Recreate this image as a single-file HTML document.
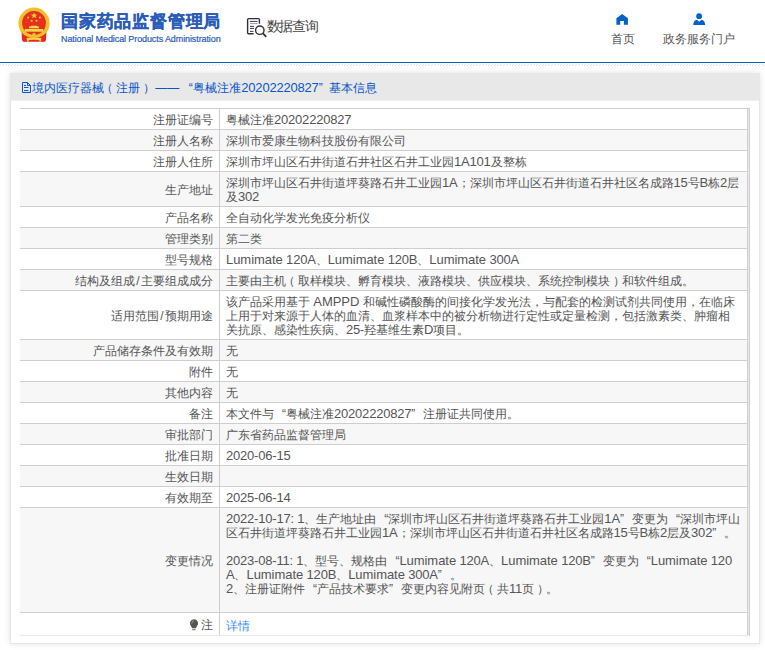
<!DOCTYPE html>
<html><head><meta charset="utf-8"><style>
*{margin:0;padding:0;box-sizing:border-box}
html,body{width:765px;height:650px;overflow:hidden;background:#fff}
body{position:relative;font-family:"Liberation Sans",sans-serif;color:#555;font-size:12px}
.a{position:absolute}
.row{position:absolute;left:20px;width:728px;border-top:1px solid #d0cdcd}
.row.g{background:#f7f7f7}
.lab{position:absolute;left:0;top:1px;bottom:-1px;width:198px;text-align:right;padding-right:5px;display:flex;align-items:center;justify-content:flex-end;white-space:nowrap}
.val{position:absolute;left:199px;top:0;bottom:0;right:0;border-left:1px solid #d0cdcd;border-right:1px solid #d0cdcd;padding:4px 6px 2px;line-height:14px;white-space:nowrap}
.val div{height:14px}
.l{font-size:13px;letter-spacing:-0.2px}
.w{letter-spacing:-0.05px}
.qo{display:inline-block;width:12px;text-align:right}
.po{position:relative;left:-2.7px}.pc{position:relative;left:2.7px}
.qc{display:inline-block;width:12px;text-align:left}
</style></head><body>
<svg class="a" style="left:0;top:0" width="60" height="48" viewBox="0 0 60 48">
<path d="M21.5 31 L22 40 Q22.3 41.7 24.5 41.7 L43.5 41.7 Q45.7 41.7 46 40 L46.5 31 Z" fill="#e52a1e"/>
<circle cx="34" cy="23.2" r="15.6" fill="#f2c12e"/>
<circle cx="34" cy="23" r="11.9" fill="#e8301f"/>
<path d="M34.1 12.4 l.85 2.2 2.3 .05 -1.8 1.45 .65 2.25 -2 -1.3 -2 1.3 .65 -2.25 -1.8 -1.45 2.3 -.05z" fill="#f5d33c"/>
<circle cx="28.1" cy="17.5" r="1" fill="#f0d040"/><circle cx="39.9" cy="17.6" r="1" fill="#f0d040"/>
<circle cx="31.6" cy="20.8" r="1" fill="#f0d040"/><circle cx="36.5" cy="20.8" r="1" fill="#f0d040"/>
<path d="M29 28.3 V26.6 L30.5 26.6 L31 25.7 H37 L37.5 26.6 L39 26.6 V28.3Z" fill="#f5d54a"/>
<rect x="24.9" y="29" width="18.2" height="2.7" fill="#f5d54a"/>
<path d="M21 30 Q24 36 34 37.2 Q44 36 47 30 L47 32 Q44 38.5 34 39 Q24 38.5 21 32Z" fill="#f2c12e"/>
<path d="M22 33 L23 41.5 L26 41.5 Q30 37 34 38.5 Q38 37 42 41.5 L45 41.5 L46 33 Q42 37.5 34 37.8 Q26 37.5 22 33Z" fill="#e52a1e"/>
<circle cx="34" cy="34.3" r="1.6" fill="#f2c12e"/>
<path d="M27 38 Q34 36.5 41 38 L40.5 40.3 Q34 39 27.5 40.3Z" fill="#f5d54a"/>
<path d="M27.3 38 L28 41.6 M40.7 38 L40 41.6" stroke="#f5d54a" stroke-width="1.4"/>
</svg>
<div class="a" style="left:61px;top:10px;font-size:16.5px;letter-spacing:0.8px;font-weight:bold;color:#2a5cb8;line-height:22px;-webkit-text-stroke:0.3px #2a5cb8;white-space:nowrap">国家药品监督管理局</div>
<div class="a" style="left:61px;top:32.5px;font-size:9px;letter-spacing:-0.1px;color:#2a5cb8;line-height:12px;-webkit-text-stroke:0.2px #2a5cb8;white-space:nowrap">National Medical Products Administration</div>
<svg class="a" style="left:246px;top:17px" width="22" height="22" viewBox="0 0 22 22">
<path d="M7.6 16.8 H2.6 Q1.6 16.8 1.6 15.8 V2.6 Q1.6 1.6 2.6 1.6 H12.4 Q13.4 1.6 13.4 2.6 V6.8" fill="none" stroke="#2f2f3f" stroke-width="1.4"/>
<path d="M4 4.4h7.5M4 9.4h4M4 11.4h4M4 14.4h3.5" stroke="#3a3a48" stroke-width="1"/>
<path d="M4 6.6h7.5" stroke="#999" stroke-width="1"/>
<circle cx="13.8" cy="13.2" r="4.2" fill="#fff" stroke="#2f2f3f" stroke-width="1.4"/>
<path d="M16.8 16.2 L20.2 19.8" stroke="#2f2f3f" stroke-width="1.7"/>
</svg>
<div class="a" style="left:266.5px;top:17px;font-size:14px;letter-spacing:-1.15px;color:#444;line-height:18px;white-space:nowrap">数据查询</div>
<svg class="a" style="left:616px;top:13px" width="12" height="12" viewBox="0 0 12 12">
<path d="M0.4 5.3 L6.2 1 L11.9 5.3 L11.9 11.8 L7.9 11.8 L7.9 7.9 L4.2 7.9 L4.2 11.8 L0.4 11.8 Z" fill="#0560c8"/>
</svg>
<div class="a" style="left:611px;top:31px;font-size:12px;color:#555;line-height:16px;white-space:nowrap">首页</div>
<svg class="a" style="left:692px;top:13px" width="14" height="13" viewBox="0 0 14 13">
<circle cx="7.1" cy="3.2" r="2.9" fill="#0560c8"/>
<path d="M1.2 12 Q1.4 7.4 5 6.8 L7.2 8.7 L9.4 6.8 Q13 7.4 13.1 12Z" fill="#0560c8"/>
</svg>
<div class="a" style="left:662.5px;top:31px;font-size:12px;color:#555;line-height:16px;white-space:nowrap">政务服务门户</div>
<div class="a" style="left:0;top:62px;width:765px;height:1px;background:#0560c8"></div>
<svg class="a" style="left:0;top:64px" width="765" height="2" shape-rendering="crispEdges"><defs><pattern id="ht" width="3" height="2" patternUnits="userSpaceOnUse"><rect x="0" y="0" width="1" height="1" fill="#e2e2e2"/><rect x="2" y="1" width="1" height="1" fill="#dcdcdc"/></pattern></defs><rect width="765" height="2" fill="url(#ht)"/></svg>
<div class="a" style="left:10px;top:73px;width:750px;height:571px;background:#fff;border:1px solid #e6e6e6;box-shadow:0 0 6px rgba(0,0,0,.12)"></div>
<div class="a" style="left:10px;top:73px;width:750px;height:27px;background:#e8e8e8"></div>
<div class="a" style="left:11px;top:100px;width:748px;height:1px;background:#eef0f8"></div>
<svg class="a" style="left:21px;top:82px" width="10" height="12" viewBox="0 0 10 12">
<path d="M1.5 0.5 H6.5 L9.5 3.5 V10.5 H1.5 Z M6.5 0.5 V3.5 H9.5" fill="none" stroke="#0a55c6" stroke-width="1"/>
<path d="M3 3.5h2M3 5.5h4.5M3 8.5h4.5" stroke="#0a55c6" stroke-width="1"/>
</svg>
<div class="a" style="left:32px;top:80px;font-size:12px;color:#0a55c6;line-height:16px;white-space:nowrap">境内医疗器械<span class="po">（</span>注册<span class="pc">）</span><span style="margin-left:3.3px">——</span><span class="qo" style="width:14px;padding-right:.5px">“</span>粤械注准<span class="l">20202220827</span><span class="qc" style="width:10px">”</span>基本信息</div>
<div class="row" style="top:108px;height:21px"><div class="lab">注册证编号</div><div class="val"><div>粤械注准<span class="l">20202220827</span></div></div></div>
<div class="row g" style="top:129px;height:21px"><div class="lab">注册人名称</div><div class="val"><div>深圳市爱康生物科技股份有限公司</div></div></div>
<div class="row" style="top:150px;height:21px"><div class="lab">注册人住所</div><div class="val"><div>深圳市坪山区石井街道石井社区石井工业园<span class="l">1A101</span>及整栋</div></div></div>
<div class="row g" style="top:171px;height:35px"><div class="lab">生产地址</div><div class="val"><div>深圳市坪山区石井街道坪葵路石井工业园<span class="l">1A</span>；深圳市坪山区石井街道石井社区名成路<span class="l">15</span>号<span class="l">B</span>栋<span class="l">2</span>层</div><div>及<span class="l">302</span></div></div></div>
<div class="row" style="top:206px;height:21px"><div class="lab">产品名称</div><div class="val"><div>全自动化学发光免疫分析仪</div></div></div>
<div class="row g" style="top:227px;height:21px"><div class="lab">管理类别</div><div class="val"><div>第二类</div></div></div>
<div class="row" style="top:248px;height:21px"><div class="lab">型号规格</div><div class="val"><div><span class="l"><span class="w">Lumimate</span> 120A</span>、<span class="l"><span class="w">Lumimate</span> 120B</span>、<span class="l"><span class="w">Lumimate</span> 300A</span></div></div></div>
<div class="row g" style="top:269px;height:21px"><div class="lab">结构及组成<span style="margin:0 1.3px">/</span>主要组成成分</div><div class="val"><div>主要由主机<span class="po">（</span>取样模块、孵育模块、液路模块、供应模块、系统控制模块<span class="pc">）</span>和软件组成。</div></div></div>
<div class="row" style="top:290px;height:49px"><div class="lab">适用范围<span style="margin:0 1.3px">/</span>预期用途</div><div class="val"><div>该产品采用基于 <span class="l"><span class="w">AMPPD</span></span> 和碱性磷酸酶的间接化学发光法，与配套的检测试剂共同使用，在临床</div><div>上用于对来源于人体的血清、血浆样本中的被分析物进行定性或定量检测，包括激素类、肿瘤相</div><div>关抗原、感染性疾病、<span class="l">25</span>-羟基维生素<span class="l">D</span>项目。</div></div></div>
<div class="row g" style="top:339px;height:21px"><div class="lab">产品储存条件及有效期</div><div class="val"><div>无</div></div></div>
<div class="row" style="top:360px;height:21px"><div class="lab">附件</div><div class="val"><div>无</div></div></div>
<div class="row g" style="top:381px;height:21px"><div class="lab">其他内容</div><div class="val"><div>无</div></div></div>
<div class="row" style="top:402px;height:21px"><div class="lab">备注</div><div class="val"><div>本文件与<span class="qo">“</span>粤械注准<span class="l">20202220827</span><span class="qc">”</span>注册证共同使用。</div></div></div>
<div class="row g" style="top:423px;height:21px"><div class="lab">审批部门</div><div class="val"><div>广东省药品监督管理局</div></div></div>
<div class="row" style="top:444px;height:21px"><div class="lab">批准日期</div><div class="val"><div><span class="l">2020-06-15</span></div></div></div>
<div class="row g" style="top:465px;height:21px"><div class="lab">生效日期</div><div class="val"><div></div></div></div>
<div class="row" style="top:486px;height:21px"><div class="lab">有效期至</div><div class="val"><div><span class="l">2025-06-14</span></div></div></div>
<div class="row g" style="top:507px;height:105px"><div class="lab">变更情况</div><div class="val"><div><span class="l">2022-10-17: 1</span>、生产地址由<span class="qo">“</span>深圳市坪山区石井街道坪葵路石井工业园<span class="l">1A</span><span class="qc">”</span>变更为<span class="qo">“</span>深圳市坪山</div><div>区石井街道坪葵路石井工业园<span class="l">1A</span>；深圳市坪山区石井街道石井社区名成路<span class="l">15</span>号<span class="l">B</span>栋<span class="l">2</span>层及<span class="l">302</span><span class="qc">”</span>。</div><div></div><div><span class="l">2023-08-11: 1</span>、型号、规格由<span class="qo">“</span><span class="l"><span class="w">Lumimate</span> 120A</span>、<span class="l"><span class="w">Lumimate</span> 120B</span><span class="qc">”</span>变更为<span class="qo">“</span><span class="l"><span class="w">Lumimate</span> 120</span></div><div><span class="l">A</span>、<span class="l"><span class="w">Lumimate</span> 120B</span>、<span class="l"><span class="w">Lumimate</span> 300A</span><span class="qc">”</span>。</div><div><span class="l">2</span>、注册证附件<span class="qo">“</span>产品技术要求<span class="qc">”</span>变更内容见附页<span class="po">（</span>共<span class="l">11</span>页<span class="pc">）</span>。</div><div></div></div></div>
<div class="row" style="top:612px;height:24px;border-bottom:1px solid #e4e8f2"><div class="lab"><svg width="9" height="12" viewBox="0 0 9 12" style="margin-right:2.5px"><path d="M4 0.3 A4 4 0 0 1 7.3 6.6 L5.7 9.2 H2.3 L0.7 6.6 A4 4 0 0 1 4 0.3Z" fill="#555"/><path d="M1.7 4.6 Q1.9 2.3 3.8 1.7" fill="none" stroke="#b0b0b0" stroke-width=".8"/><rect x="2.2" y="10.2" width="3.4" height="1" fill="#666"/></svg>注</div><div class="val" style="padding-top:6px"><div style="color:#3a8ef5">详情</div></div></div>
<div class="a" style="left:748px;top:109px;width:1px;height:526px;background:#e4e8f2"></div>
<div class="a" style="left:748px;top:108px;width:1px;height:1px;background:#d0cdcd"></div>
<div class="a" style="left:749px;top:108px;width:1px;height:528px;background:#d0cdcd"></div>
</body></html>
